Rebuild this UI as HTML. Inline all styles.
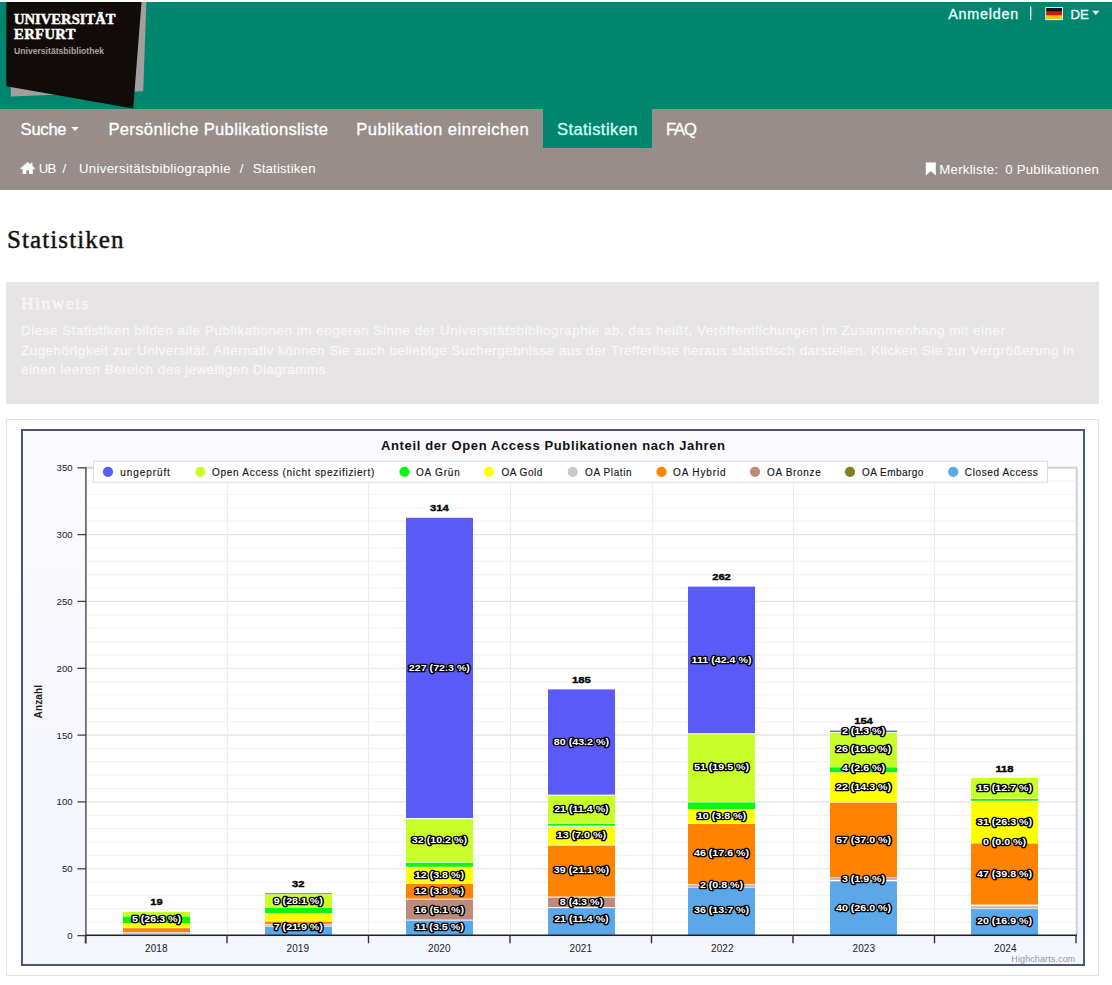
<!DOCTYPE html>
<html><head><meta charset="utf-8"><title>Statistiken</title>
<style>
*{margin:0;padding:0}
html,body{width:1112px;height:985px;overflow:hidden;background:#fff}
body{position:relative;font-family:"Liberation Sans",sans-serif}
</style></head><body>
<svg width="1112" height="985" viewBox="0 0 1112 985" style="position:absolute;left:0;top:0;display:block">
<defs><linearGradient id="bg" x1="0" y1="0" x2="0" y2="1"><stop offset="0" stop-color="#fafafe"/><stop offset="1" stop-color="#f4f5fd"/></linearGradient></defs>
<rect x="0" y="0" width="1112" height="2" fill="#f8fdfc"/>
<rect x="0" y="2" width="1112" height="107" fill="#00866e"/>
<rect x="0" y="109" width="1112" height="81" fill="#978e8c"/>
<rect x="543" y="109" width="109" height="39" fill="#00866e"/>
<polygon points="10.8,2 146.4,2 143.2,91.3 10.8,96.6" fill="#a39e9f"/>
<polygon points="6.3,2 141.5,2 133.2,108.5 6.3,86.2" fill="#110c09"/>
<text x="14.00" y="24.10" text-anchor="start" style="font-family:'Liberation Serif',serif;font-size:14.6px;font-weight:bold" fill="#fff" textLength="101.50" lengthAdjust="spacing" stroke="#fff" stroke-width="0.5">UNIVERSITÄT</text>
<text x="14.00" y="39.00" text-anchor="start" style="font-family:'Liberation Serif',serif;font-size:14.6px;font-weight:bold" fill="#fff" textLength="61.50" lengthAdjust="spacing" stroke="#fff" stroke-width="0.5">ERFURT</text>
<text x="14.00" y="53.80" text-anchor="start" style="font-family:'Liberation Sans',sans-serif;font-size:8.6px;font-weight:bold" fill="#aca5a5" textLength="90.00" lengthAdjust="spacing">Universitätsbibliothek</text>
<text x="948.30" y="18.90" text-anchor="start" style="font-family:'Liberation Sans',sans-serif;font-size:14.3px;font-weight:normal" fill="#f2fffb" textLength="69.80" lengthAdjust="spacing" stroke="#f2fffb" stroke-width="0.3">Anmelden</text>
<rect x="1030" y="6.5" width="1.3" height="13.3" fill="#f2fffb"/>
<rect x="1045.2" y="7" width="17.8" height="13.1" fill="#e8e8e8"/>
<rect x="1046.2" y="8" width="15.8" height="3.8" fill="#111"/>
<rect x="1046.2" y="11.8" width="15.8" height="3.8" fill="#dd1111"/>
<rect x="1046.2" y="15.6" width="15.8" height="3.5" fill="#f5c800"/>
<text x="1070.50" y="18.90" text-anchor="start" style="font-family:'Liberation Sans',sans-serif;font-size:13.2px;font-weight:normal" fill="#f2fffb" stroke="#f2fffb" stroke-width="0.3">DE</text>
<polygon points="1092.2,10.8 1099.4,10.8 1095.8,15" fill="#f2fffb"/>
<text x="20.60" y="135.40" text-anchor="start" style="font-family:'Liberation Sans',sans-serif;font-size:16.6px;font-weight:normal" fill="#fff" textLength="46.00" lengthAdjust="spacing" stroke="#fff" stroke-width="0.3">Suche</text>
<polygon points="71.3,127 78.9,127 75.1,131" fill="#fff"/>
<text x="108.40" y="135.40" text-anchor="start" style="font-family:'Liberation Sans',sans-serif;font-size:16.6px;font-weight:normal" fill="#fff" textLength="219.50" lengthAdjust="spacing" stroke="#fff" stroke-width="0.3">Persönliche Publikationsliste</text>
<text x="356.20" y="135.40" text-anchor="start" style="font-family:'Liberation Sans',sans-serif;font-size:16.6px;font-weight:normal" fill="#fff" textLength="172.50" lengthAdjust="spacing" stroke="#fff" stroke-width="0.3">Publikation einreichen</text>
<text x="557.00" y="135.40" text-anchor="start" style="font-family:'Liberation Sans',sans-serif;font-size:16.6px;font-weight:normal" fill="#d4fff3" textLength="80.50" lengthAdjust="spacing" stroke="#d4fff3" stroke-width="0.3">Statistiken</text>
<text x="666.00" y="135.40" text-anchor="start" style="font-family:'Liberation Sans',sans-serif;font-size:16.6px;font-weight:normal" fill="#fff" textLength="31.00" lengthAdjust="spacing" stroke="#fff" stroke-width="0.3">FAQ</text>
<path transform="translate(20.4,162)" d="M7.3 0 L0 6.3 L1.2 7.6 L2.2 6.8 V11.9 H5.9 V8.4 H8.7 V11.9 H12.4 V6.8 L13.4 7.6 L14.6 6.3 L12.1 4.1 V0.8 H10.4 V2.6 Z" fill="#fff"/>
<text x="38.80" y="173.00" text-anchor="start" style="font-family:'Liberation Sans',sans-serif;font-size:13.2px;font-weight:normal" fill="#fff" textLength="17.60" lengthAdjust="spacing">UB</text>
<text x="62.60" y="173.00" text-anchor="start" style="font-family:'Liberation Sans',sans-serif;font-size:13.2px;font-weight:normal" fill="#fff">/</text>
<text x="79.00" y="173.00" text-anchor="start" style="font-family:'Liberation Sans',sans-serif;font-size:13.2px;font-weight:normal" fill="#fff" textLength="151.50" lengthAdjust="spacing">Universitätsbibliographie</text>
<text x="239.80" y="173.00" text-anchor="start" style="font-family:'Liberation Sans',sans-serif;font-size:13.2px;font-weight:normal" fill="#fff">/</text>
<text x="252.70" y="173.00" text-anchor="start" style="font-family:'Liberation Sans',sans-serif;font-size:13.2px;font-weight:normal" fill="#fff" textLength="62.80" lengthAdjust="spacing">Statistiken</text>
<path d="M925.8 162.4 H935.8 V175.4 L930.8 171 L925.8 175.4 Z" fill="#fff"/>
<text x="939.30" y="173.60" text-anchor="start" style="font-family:'Liberation Sans',sans-serif;font-size:13.2px;font-weight:normal" fill="#fff" textLength="58.80" lengthAdjust="spacing">Merkliste:</text>
<text x="1005.20" y="173.60" text-anchor="start" style="font-family:'Liberation Sans',sans-serif;font-size:13.2px;font-weight:normal" fill="#fff" textLength="93.60" lengthAdjust="spacing">0 Publikationen</text>
<text x="7.00" y="247.70" text-anchor="start" style="font-family:'Liberation Serif',serif;font-size:25px;font-weight:normal" fill="#111" textLength="116.50" lengthAdjust="spacing" stroke="#111" stroke-width="0.45">Statistiken</text>
<rect x="6" y="282" width="1093" height="122" fill="#e6e4e5"/>
<text x="21.00" y="309.00" text-anchor="start" style="font-family:'Liberation Serif',serif;font-size:17.5px;font-weight:normal" fill="#f7f7f7" textLength="67.50" lengthAdjust="spacing" stroke="#f7f7f7" stroke-width="0.4">Hinweis</text>
<text x="21.00" y="335.30" text-anchor="start" style="font-family:'Liberation Sans',sans-serif;font-size:13.5px;font-weight:normal" fill="#f7f7f7" textLength="984.00" lengthAdjust="spacing" stroke="#f7f7f7" stroke-width="0.3">Diese Statistiken bilden alle Publikationen im engeren Sinne der Universitätsbibliographie ab, das heißt, Veröffentlichungen im Zusammenhang mit einer</text>
<text x="21.00" y="354.80" text-anchor="start" style="font-family:'Liberation Sans',sans-serif;font-size:13.5px;font-weight:normal" fill="#f7f7f7" textLength="1053.00" lengthAdjust="spacing" stroke="#f7f7f7" stroke-width="0.3">Zugehörigkeit zur Universität. Alternativ können Sie auch beliebige Suchergebnisse aus der Trefferliste heraus statistisch darstellen. Klicken Sie zur Vergrößerung in</text>
<text x="21.00" y="374.30" text-anchor="start" style="font-family:'Liberation Sans',sans-serif;font-size:13.5px;font-weight:normal" fill="#f7f7f7" textLength="308.50" lengthAdjust="spacing" stroke="#f7f7f7" stroke-width="0.3">einen leeren Bereich des jeweiligen Diagramms.</text>
<rect x="6.5" y="419.5" width="1092" height="556" fill="#fff" stroke="#e2e2e2" stroke-width="1"/>
<rect x="22" y="430" width="1062" height="535" fill="url(#bg)" stroke="#4a5878" stroke-width="2"/>
<rect x="86" y="467" width="991" height="468" fill="#ffffff"/>
<line x1="86" x2="1077" y1="935.60" y2="935.60" stroke="#e3e3e3" stroke-width="1.2"/>
<line x1="86" x2="1077" y1="922.23" y2="922.23" stroke="#f3f3f3" stroke-width="1.2"/>
<line x1="86" x2="1077" y1="908.87" y2="908.87" stroke="#f3f3f3" stroke-width="1.2"/>
<line x1="86" x2="1077" y1="895.50" y2="895.50" stroke="#f3f3f3" stroke-width="1.2"/>
<line x1="86" x2="1077" y1="882.13" y2="882.13" stroke="#f3f3f3" stroke-width="1.2"/>
<line x1="86" x2="1077" y1="868.76" y2="868.76" stroke="#e3e3e3" stroke-width="1.2"/>
<line x1="86" x2="1077" y1="855.40" y2="855.40" stroke="#f3f3f3" stroke-width="1.2"/>
<line x1="86" x2="1077" y1="842.03" y2="842.03" stroke="#f3f3f3" stroke-width="1.2"/>
<line x1="86" x2="1077" y1="828.66" y2="828.66" stroke="#f3f3f3" stroke-width="1.2"/>
<line x1="86" x2="1077" y1="815.30" y2="815.30" stroke="#f3f3f3" stroke-width="1.2"/>
<line x1="86" x2="1077" y1="801.93" y2="801.93" stroke="#e3e3e3" stroke-width="1.2"/>
<line x1="86" x2="1077" y1="788.56" y2="788.56" stroke="#f3f3f3" stroke-width="1.2"/>
<line x1="86" x2="1077" y1="775.20" y2="775.20" stroke="#f3f3f3" stroke-width="1.2"/>
<line x1="86" x2="1077" y1="761.83" y2="761.83" stroke="#f3f3f3" stroke-width="1.2"/>
<line x1="86" x2="1077" y1="748.46" y2="748.46" stroke="#f3f3f3" stroke-width="1.2"/>
<line x1="86" x2="1077" y1="735.10" y2="735.10" stroke="#e3e3e3" stroke-width="1.2"/>
<line x1="86" x2="1077" y1="721.73" y2="721.73" stroke="#f3f3f3" stroke-width="1.2"/>
<line x1="86" x2="1077" y1="708.36" y2="708.36" stroke="#f3f3f3" stroke-width="1.2"/>
<line x1="86" x2="1077" y1="694.99" y2="694.99" stroke="#f3f3f3" stroke-width="1.2"/>
<line x1="86" x2="1077" y1="681.63" y2="681.63" stroke="#f3f3f3" stroke-width="1.2"/>
<line x1="86" x2="1077" y1="668.26" y2="668.26" stroke="#e3e3e3" stroke-width="1.2"/>
<line x1="86" x2="1077" y1="654.89" y2="654.89" stroke="#f3f3f3" stroke-width="1.2"/>
<line x1="86" x2="1077" y1="641.53" y2="641.53" stroke="#f3f3f3" stroke-width="1.2"/>
<line x1="86" x2="1077" y1="628.16" y2="628.16" stroke="#f3f3f3" stroke-width="1.2"/>
<line x1="86" x2="1077" y1="614.79" y2="614.79" stroke="#f3f3f3" stroke-width="1.2"/>
<line x1="86" x2="1077" y1="601.42" y2="601.42" stroke="#e3e3e3" stroke-width="1.2"/>
<line x1="86" x2="1077" y1="588.06" y2="588.06" stroke="#f3f3f3" stroke-width="1.2"/>
<line x1="86" x2="1077" y1="574.69" y2="574.69" stroke="#f3f3f3" stroke-width="1.2"/>
<line x1="86" x2="1077" y1="561.32" y2="561.32" stroke="#f3f3f3" stroke-width="1.2"/>
<line x1="86" x2="1077" y1="547.96" y2="547.96" stroke="#f3f3f3" stroke-width="1.2"/>
<line x1="86" x2="1077" y1="534.59" y2="534.59" stroke="#e3e3e3" stroke-width="1.2"/>
<line x1="86" x2="1077" y1="521.22" y2="521.22" stroke="#f3f3f3" stroke-width="1.2"/>
<line x1="86" x2="1077" y1="507.86" y2="507.86" stroke="#f3f3f3" stroke-width="1.2"/>
<line x1="86" x2="1077" y1="494.49" y2="494.49" stroke="#f3f3f3" stroke-width="1.2"/>
<line x1="86" x2="1077" y1="481.12" y2="481.12" stroke="#f3f3f3" stroke-width="1.2"/>
<line x1="86" x2="1077" y1="467.75" y2="467.75" stroke="#e3e3e3" stroke-width="1.2"/>
<line x1="227.5" x2="227.5" y1="467" y2="935" stroke="#ececec" stroke-width="1"/>
<line x1="368.5" x2="368.5" y1="467" y2="935" stroke="#ececec" stroke-width="1"/>
<line x1="510.5" x2="510.5" y1="467" y2="935" stroke="#ececec" stroke-width="1"/>
<line x1="652.5" x2="652.5" y1="467" y2="935" stroke="#ececec" stroke-width="1"/>
<line x1="793.5" x2="793.5" y1="467" y2="935" stroke="#ececec" stroke-width="1"/>
<line x1="934.5" x2="934.5" y1="467" y2="935" stroke="#ececec" stroke-width="1"/>
<line x1="1076.5" x2="1076.5" y1="467" y2="935" stroke="#ececec" stroke-width="1"/>
<rect x="123" y="911.8" width="67" height="23.20" fill="#fff"/>
<rect x="123" y="911.8" width="67" height="5.00" fill="#c8ff28"/>
<rect x="123" y="916.8" width="67" height="6.20" fill="#08f810"/>
<rect x="123" y="923" width="67" height="4.60" fill="#ffff00"/>
<rect x="123" y="928.2" width="67" height="4.00" fill="#ff8200"/>
<rect x="123" y="932.7" width="67" height="1.10" fill="#d2b2a8"/>
<rect x="265" y="893.3" width="67" height="41.70" fill="#fff"/>
<rect x="265" y="893.3" width="67" height="1.00" fill="#5a5af8"/>
<rect x="265" y="894.3" width="67" height="12.90" fill="#c8ff28"/>
<rect x="265" y="907.8" width="67" height="5.20" fill="#08f810"/>
<rect x="265" y="913.5" width="67" height="7.40" fill="#ffff00"/>
<rect x="265" y="921.6" width="67" height="2.30" fill="#ff8200"/>
<rect x="265" y="924.5" width="67" height="1.30" fill="#d2b2a8"/>
<rect x="265" y="926.6" width="67" height="8.40" fill="#5aa8e8"/>
<rect x="406" y="517.8" width="67" height="417.20" fill="#fff"/>
<rect x="406" y="517.8" width="67" height="300.20" fill="#5a5af8"/>
<rect x="406" y="819.2" width="67" height="43.00" fill="#c8ff28"/>
<rect x="406" y="862.8" width="67" height="4.00" fill="#08f810"/>
<rect x="406" y="867.6" width="67" height="15.30" fill="#ffff00"/>
<rect x="406" y="883.8" width="67" height="14.80" fill="#ff8200"/>
<rect x="406" y="899.6" width="67" height="20.00" fill="#c08a78"/>
<rect x="406" y="920.6" width="67" height="14.40" fill="#5aa8e8"/>
<rect x="548" y="689.4" width="67" height="245.60" fill="#fff"/>
<rect x="548" y="689.4" width="67" height="105.20" fill="#5a5af8"/>
<rect x="548" y="795.6" width="67" height="27.70" fill="#c8ff28"/>
<rect x="548" y="823.8" width="67" height="1.90" fill="#08f810"/>
<rect x="548" y="826.9" width="67" height="17.70" fill="#ffff00"/>
<rect x="548" y="845.6" width="67" height="51.00" fill="#ff8200"/>
<rect x="548" y="897.6" width="67" height="9.50" fill="#c08a78"/>
<rect x="548" y="908.1" width="67" height="26.90" fill="#5aa8e8"/>
<rect x="688" y="586.6" width="67" height="348.40" fill="#fff"/>
<rect x="688" y="586.6" width="67" height="146.60" fill="#5a5af8"/>
<rect x="688" y="734.2" width="67" height="67.40" fill="#c8ff28"/>
<rect x="688" y="802.4" width="67" height="6.60" fill="#08f810"/>
<rect x="688" y="810" width="67" height="13.60" fill="#ffff00"/>
<rect x="688" y="824" width="67" height="60.00" fill="#ff8200"/>
<rect x="688" y="884.6" width="67" height="2.30" fill="#d2b2a8"/>
<rect x="688" y="887.6" width="67" height="47.40" fill="#5aa8e8"/>
<rect x="830" y="730.6" width="67" height="204.40" fill="#fff"/>
<rect x="830" y="730.6" width="67" height="1.30" fill="#5a5af8"/>
<rect x="830" y="732.6" width="67" height="34.60" fill="#c8ff28"/>
<rect x="830" y="767.4" width="67" height="4.90" fill="#08f810"/>
<rect x="830" y="772.6" width="67" height="29.70" fill="#ffff00"/>
<rect x="830" y="802.7" width="67" height="74.30" fill="#ff8200"/>
<rect x="830" y="877.2" width="67" height="2.80" fill="#d2b2a8"/>
<rect x="830" y="881.3" width="67" height="53.70" fill="#5aa8e8"/>
<rect x="971" y="778" width="67" height="157.00" fill="#fff"/>
<rect x="971" y="778" width="67" height="20.60" fill="#c8ff28"/>
<rect x="971" y="799" width="67" height="1.80" fill="#08f810"/>
<rect x="971" y="802" width="67" height="41.00" fill="#ffff00"/>
<rect x="971" y="843.5" width="67" height="61.10" fill="#ff8200"/>
<rect x="971" y="906.2" width="67" height="2.20" fill="#d2b2a8"/>
<rect x="971" y="909.1" width="67" height="25.90" fill="#5aa8e8"/>
<path d="M86 467.8 H1076.7 V935" fill="none" stroke="#d2d2d2" stroke-width="2"/>
<line x1="85.9" x2="85.9" y1="467" y2="943.5" stroke="#6e6e6e" stroke-width="1.8"/>
<line x1="77.4" x2="86" y1="935.6" y2="935.6" stroke="#444" stroke-width="1.3"/>
<text x="72.60" y="939.10" text-anchor="end" style="font-family:'Liberation Sans',sans-serif;font-size:9.6px;font-weight:normal" fill="#222">0</text>
<line x1="77.4" x2="86" y1="868.8" y2="868.8" stroke="#444" stroke-width="1.3"/>
<text x="72.60" y="872.26" text-anchor="end" style="font-family:'Liberation Sans',sans-serif;font-size:9.6px;font-weight:normal" fill="#222">50</text>
<line x1="77.4" x2="86" y1="801.9" y2="801.9" stroke="#444" stroke-width="1.3"/>
<text x="72.60" y="805.43" text-anchor="end" style="font-family:'Liberation Sans',sans-serif;font-size:9.6px;font-weight:normal" fill="#222">100</text>
<line x1="77.4" x2="86" y1="735.1" y2="735.1" stroke="#444" stroke-width="1.3"/>
<text x="72.60" y="738.60" text-anchor="end" style="font-family:'Liberation Sans',sans-serif;font-size:9.6px;font-weight:normal" fill="#222">150</text>
<line x1="77.4" x2="86" y1="668.3" y2="668.3" stroke="#444" stroke-width="1.3"/>
<text x="72.60" y="671.76" text-anchor="end" style="font-family:'Liberation Sans',sans-serif;font-size:9.6px;font-weight:normal" fill="#222">200</text>
<line x1="77.4" x2="86" y1="601.4" y2="601.4" stroke="#444" stroke-width="1.3"/>
<text x="72.60" y="604.92" text-anchor="end" style="font-family:'Liberation Sans',sans-serif;font-size:9.6px;font-weight:normal" fill="#222">250</text>
<line x1="77.4" x2="86" y1="534.6" y2="534.6" stroke="#444" stroke-width="1.3"/>
<text x="72.60" y="538.09" text-anchor="end" style="font-family:'Liberation Sans',sans-serif;font-size:9.6px;font-weight:normal" fill="#222">300</text>
<line x1="77.4" x2="86" y1="467.8" y2="467.8" stroke="#444" stroke-width="1.3"/>
<text x="72.60" y="471.25" text-anchor="end" style="font-family:'Liberation Sans',sans-serif;font-size:9.6px;font-weight:normal" fill="#222">350</text>
<line x1="86" x2="1077" y1="935.3" y2="935.3" stroke="#222" stroke-width="1.6"/>
<line x1="85.5" x2="85.5" y1="935" y2="943.3" stroke="#333" stroke-width="1.4"/>
<line x1="227.0" x2="227.0" y1="935" y2="943.3" stroke="#333" stroke-width="1.4"/>
<line x1="368.5" x2="368.5" y1="935" y2="943.3" stroke="#333" stroke-width="1.4"/>
<line x1="510.0" x2="510.0" y1="935" y2="943.3" stroke="#333" stroke-width="1.4"/>
<line x1="651.5" x2="651.5" y1="935" y2="943.3" stroke="#333" stroke-width="1.4"/>
<line x1="793.0" x2="793.0" y1="935" y2="943.3" stroke="#333" stroke-width="1.4"/>
<line x1="934.5" x2="934.5" y1="935" y2="943.3" stroke="#333" stroke-width="1.4"/>
<line x1="1076.0" x2="1076.0" y1="935" y2="943.3" stroke="#333" stroke-width="1.4"/>
<text x="156.25" y="952.10" text-anchor="middle" style="font-family:'Liberation Sans',sans-serif;font-size:10px;font-weight:normal" fill="#222" textLength="22.50" lengthAdjust="spacing">2018</text>
<text x="297.75" y="952.10" text-anchor="middle" style="font-family:'Liberation Sans',sans-serif;font-size:10px;font-weight:normal" fill="#222" textLength="22.50" lengthAdjust="spacing">2019</text>
<text x="439.25" y="952.10" text-anchor="middle" style="font-family:'Liberation Sans',sans-serif;font-size:10px;font-weight:normal" fill="#222" textLength="22.50" lengthAdjust="spacing">2020</text>
<text x="580.75" y="952.10" text-anchor="middle" style="font-family:'Liberation Sans',sans-serif;font-size:10px;font-weight:normal" fill="#222" textLength="22.50" lengthAdjust="spacing">2021</text>
<text x="722.25" y="952.10" text-anchor="middle" style="font-family:'Liberation Sans',sans-serif;font-size:10px;font-weight:normal" fill="#222" textLength="22.50" lengthAdjust="spacing">2022</text>
<text x="863.75" y="952.10" text-anchor="middle" style="font-family:'Liberation Sans',sans-serif;font-size:10px;font-weight:normal" fill="#222" textLength="22.50" lengthAdjust="spacing">2023</text>
<text x="1005.25" y="952.10" text-anchor="middle" style="font-family:'Liberation Sans',sans-serif;font-size:10px;font-weight:normal" fill="#222" textLength="22.50" lengthAdjust="spacing">2024</text>
<text transform="translate(41.6,701.7) rotate(-90)" text-anchor="middle" style="font-family:'Liberation Sans',sans-serif;font-size:10px;font-weight:bold" fill="#222" textLength="33.5" lengthAdjust="spacing">Anzahl</text>
<text x="381.00" y="449.90" text-anchor="start" style="font-family:'Liberation Sans',sans-serif;font-size:13px;font-weight:bold" fill="#111" textLength="344.00" lengthAdjust="spacing">Anteil der Open Access Publikationen nach Jahren</text>
<rect x="93.5" y="461.2" width="954" height="21" fill="#fff" stroke="#dcdcdc" stroke-width="1"/>
<circle cx="108" cy="471.8" r="5.1" fill="#5a5af8"/>
<text x="120.20" y="475.50" text-anchor="start" style="font-family:'Liberation Sans',sans-serif;font-size:10px;font-weight:normal" fill="#151515" textLength="49.70" lengthAdjust="spacing" stroke="#151515" stroke-width="0.15">ungeprüft</text>
<circle cx="200.4" cy="471.8" r="5.1" fill="#c8ff28"/>
<text x="212.00" y="475.50" text-anchor="start" style="font-family:'Liberation Sans',sans-serif;font-size:10px;font-weight:normal" fill="#151515" textLength="162.30" lengthAdjust="spacing" stroke="#151515" stroke-width="0.15">Open Access (nicht spezifiziert)</text>
<circle cx="404.5" cy="471.8" r="5.1" fill="#08f810"/>
<text x="416.00" y="475.50" text-anchor="start" style="font-family:'Liberation Sans',sans-serif;font-size:10px;font-weight:normal" fill="#151515" textLength="43.80" lengthAdjust="spacing" stroke="#151515" stroke-width="0.15">OA Grün</text>
<circle cx="489" cy="471.8" r="5.1" fill="#ffff00"/>
<text x="501.40" y="475.50" text-anchor="start" style="font-family:'Liberation Sans',sans-serif;font-size:10px;font-weight:normal" fill="#151515" textLength="40.90" lengthAdjust="spacing" stroke="#151515" stroke-width="0.15">OA Gold</text>
<circle cx="572.7" cy="471.8" r="5.1" fill="#c8c8c8"/>
<text x="585.00" y="475.50" text-anchor="start" style="font-family:'Liberation Sans',sans-serif;font-size:10px;font-weight:normal" fill="#151515" textLength="46.60" lengthAdjust="spacing" stroke="#151515" stroke-width="0.15">OA Platin</text>
<circle cx="661.5" cy="471.8" r="5.1" fill="#ff8200"/>
<text x="673.00" y="475.50" text-anchor="start" style="font-family:'Liberation Sans',sans-serif;font-size:10px;font-weight:normal" fill="#151515" textLength="52.60" lengthAdjust="spacing" stroke="#151515" stroke-width="0.15">OA Hybrid</text>
<circle cx="755" cy="471.8" r="5.1" fill="#c08a78"/>
<text x="767.00" y="475.50" text-anchor="start" style="font-family:'Liberation Sans',sans-serif;font-size:10px;font-weight:normal" fill="#151515" textLength="53.80" lengthAdjust="spacing" stroke="#151515" stroke-width="0.15">OA Bronze</text>
<circle cx="850" cy="471.8" r="5.1" fill="#808020"/>
<text x="862.00" y="475.50" text-anchor="start" style="font-family:'Liberation Sans',sans-serif;font-size:10px;font-weight:normal" fill="#151515" textLength="61.40" lengthAdjust="spacing" stroke="#151515" stroke-width="0.15">OA Embargo</text>
<circle cx="953.2" cy="471.8" r="5.1" fill="#5aa8e8"/>
<text x="964.80" y="475.50" text-anchor="start" style="font-family:'Liberation Sans',sans-serif;font-size:10px;font-weight:normal" fill="#151515" textLength="73.00" lengthAdjust="spacing" stroke="#151515" stroke-width="0.15">Closed Access</text>
<text transform="translate(156.50,904.80) scale(1.22,1)" text-anchor="middle" style="font-family:'Liberation Sans',sans-serif;font-size:9.2px;font-weight:bold" fill="#000" stroke="#000" stroke-width="0.35">19</text>
<text transform="translate(298.30,886.70) scale(1.22,1)" text-anchor="middle" style="font-family:'Liberation Sans',sans-serif;font-size:9.2px;font-weight:bold" fill="#000" stroke="#000" stroke-width="0.35">32</text>
<text transform="translate(439.40,511.00) scale(1.22,1)" text-anchor="middle" style="font-family:'Liberation Sans',sans-serif;font-size:9.2px;font-weight:bold" fill="#000" stroke="#000" stroke-width="0.35">314</text>
<text transform="translate(581.40,683.10) scale(1.22,1)" text-anchor="middle" style="font-family:'Liberation Sans',sans-serif;font-size:9.2px;font-weight:bold" fill="#000" stroke="#000" stroke-width="0.35">185</text>
<text transform="translate(721.50,579.80) scale(1.22,1)" text-anchor="middle" style="font-family:'Liberation Sans',sans-serif;font-size:9.2px;font-weight:bold" fill="#000" stroke="#000" stroke-width="0.35">262</text>
<text transform="translate(863.50,724.00) scale(1.22,1)" text-anchor="middle" style="font-family:'Liberation Sans',sans-serif;font-size:9.2px;font-weight:bold" fill="#000" stroke="#000" stroke-width="0.35">154</text>
<text transform="translate(1004.50,771.80) scale(1.22,1)" text-anchor="middle" style="font-family:'Liberation Sans',sans-serif;font-size:9.2px;font-weight:bold" fill="#000" stroke="#000" stroke-width="0.35">118</text>
<text transform="translate(156.50,922.00) scale(1.16,1)" text-anchor="middle" style="font-family:'Liberation Sans',sans-serif;font-size:9.2px;font-weight:bold" fill="#fff" stroke="#000" stroke-width="2.7" paint-order="stroke" stroke-linejoin="round">5 (26.3 %)</text>
<text transform="translate(298.30,903.60) scale(1.16,1)" text-anchor="middle" style="font-family:'Liberation Sans',sans-serif;font-size:9.2px;font-weight:bold" fill="#fff" stroke="#000" stroke-width="2.7" paint-order="stroke" stroke-linejoin="round">9 (28.1 %)</text>
<text transform="translate(298.30,930.00) scale(1.16,1)" text-anchor="middle" style="font-family:'Liberation Sans',sans-serif;font-size:9.2px;font-weight:bold" fill="#fff" stroke="#000" stroke-width="2.7" paint-order="stroke" stroke-linejoin="round">7 (21.9 %)</text>
<text transform="translate(439.40,670.60) scale(1.16,1)" text-anchor="middle" style="font-family:'Liberation Sans',sans-serif;font-size:9.2px;font-weight:bold" fill="#fff" stroke="#000" stroke-width="2.7" paint-order="stroke" stroke-linejoin="round">227 (72.3 %)</text>
<text transform="translate(439.40,843.10) scale(1.16,1)" text-anchor="middle" style="font-family:'Liberation Sans',sans-serif;font-size:9.2px;font-weight:bold" fill="#fff" stroke="#000" stroke-width="2.7" paint-order="stroke" stroke-linejoin="round">32 (10.2 %)</text>
<text transform="translate(439.40,878.40) scale(1.16,1)" text-anchor="middle" style="font-family:'Liberation Sans',sans-serif;font-size:9.2px;font-weight:bold" fill="#fff" stroke="#000" stroke-width="2.7" paint-order="stroke" stroke-linejoin="round">12 (3.8 %)</text>
<text transform="translate(439.40,893.90) scale(1.16,1)" text-anchor="middle" style="font-family:'Liberation Sans',sans-serif;font-size:9.2px;font-weight:bold" fill="#fff" stroke="#000" stroke-width="2.7" paint-order="stroke" stroke-linejoin="round">12 (3.8 %)</text>
<text transform="translate(439.40,913.00) scale(1.16,1)" text-anchor="middle" style="font-family:'Liberation Sans',sans-serif;font-size:9.2px;font-weight:bold" fill="#fff" stroke="#000" stroke-width="2.7" paint-order="stroke" stroke-linejoin="round">16 (5.1 %)</text>
<text transform="translate(439.40,930.00) scale(1.16,1)" text-anchor="middle" style="font-family:'Liberation Sans',sans-serif;font-size:9.2px;font-weight:bold" fill="#fff" stroke="#000" stroke-width="2.7" paint-order="stroke" stroke-linejoin="round">11 (3.5 %)</text>
<text transform="translate(581.40,744.60) scale(1.16,1)" text-anchor="middle" style="font-family:'Liberation Sans',sans-serif;font-size:9.2px;font-weight:bold" fill="#fff" stroke="#000" stroke-width="2.7" paint-order="stroke" stroke-linejoin="round">80 (43.2 %)</text>
<text transform="translate(581.40,811.60) scale(1.16,1)" text-anchor="middle" style="font-family:'Liberation Sans',sans-serif;font-size:9.2px;font-weight:bold" fill="#fff" stroke="#000" stroke-width="2.7" paint-order="stroke" stroke-linejoin="round">21 (11.4 %)</text>
<text transform="translate(581.40,838.20) scale(1.16,1)" text-anchor="middle" style="font-family:'Liberation Sans',sans-serif;font-size:9.2px;font-weight:bold" fill="#fff" stroke="#000" stroke-width="2.7" paint-order="stroke" stroke-linejoin="round">13 (7.0 %)</text>
<text transform="translate(581.40,873.10) scale(1.16,1)" text-anchor="middle" style="font-family:'Liberation Sans',sans-serif;font-size:9.2px;font-weight:bold" fill="#fff" stroke="#000" stroke-width="2.7" paint-order="stroke" stroke-linejoin="round">39 (21.1 %)</text>
<text transform="translate(581.40,904.70) scale(1.16,1)" text-anchor="middle" style="font-family:'Liberation Sans',sans-serif;font-size:9.2px;font-weight:bold" fill="#fff" stroke="#000" stroke-width="2.7" paint-order="stroke" stroke-linejoin="round">8 (4.3 %)</text>
<text transform="translate(581.40,922.00) scale(1.16,1)" text-anchor="middle" style="font-family:'Liberation Sans',sans-serif;font-size:9.2px;font-weight:bold" fill="#fff" stroke="#000" stroke-width="2.7" paint-order="stroke" stroke-linejoin="round">21 (11.4 %)</text>
<text transform="translate(721.50,662.90) scale(1.16,1)" text-anchor="middle" style="font-family:'Liberation Sans',sans-serif;font-size:9.2px;font-weight:bold" fill="#fff" stroke="#000" stroke-width="2.7" paint-order="stroke" stroke-linejoin="round">111 (42.4 %)</text>
<text transform="translate(721.50,769.70) scale(1.16,1)" text-anchor="middle" style="font-family:'Liberation Sans',sans-serif;font-size:9.2px;font-weight:bold" fill="#fff" stroke="#000" stroke-width="2.7" paint-order="stroke" stroke-linejoin="round">51 (19.5 %)</text>
<text transform="translate(721.50,818.50) scale(1.16,1)" text-anchor="middle" style="font-family:'Liberation Sans',sans-serif;font-size:9.2px;font-weight:bold" fill="#fff" stroke="#000" stroke-width="2.7" paint-order="stroke" stroke-linejoin="round">10 (3.8 %)</text>
<text transform="translate(721.50,855.50) scale(1.16,1)" text-anchor="middle" style="font-family:'Liberation Sans',sans-serif;font-size:9.2px;font-weight:bold" fill="#fff" stroke="#000" stroke-width="2.7" paint-order="stroke" stroke-linejoin="round">46 (17.6 %)</text>
<text transform="translate(721.50,887.90) scale(1.16,1)" text-anchor="middle" style="font-family:'Liberation Sans',sans-serif;font-size:9.2px;font-weight:bold" fill="#fff" stroke="#000" stroke-width="2.7" paint-order="stroke" stroke-linejoin="round">2 (0.8 %)</text>
<text transform="translate(721.50,912.70) scale(1.16,1)" text-anchor="middle" style="font-family:'Liberation Sans',sans-serif;font-size:9.2px;font-weight:bold" fill="#fff" stroke="#000" stroke-width="2.7" paint-order="stroke" stroke-linejoin="round">36 (13.7 %)</text>
<text transform="translate(863.50,734.30) scale(1.16,1)" text-anchor="middle" style="font-family:'Liberation Sans',sans-serif;font-size:9.2px;font-weight:bold" fill="#fff" stroke="#000" stroke-width="2.7" paint-order="stroke" stroke-linejoin="round">2 (1.3 %)</text>
<text transform="translate(863.50,751.50) scale(1.16,1)" text-anchor="middle" style="font-family:'Liberation Sans',sans-serif;font-size:9.2px;font-weight:bold" fill="#fff" stroke="#000" stroke-width="2.7" paint-order="stroke" stroke-linejoin="round">26 (16.9 %)</text>
<text transform="translate(863.50,771.30) scale(1.16,1)" text-anchor="middle" style="font-family:'Liberation Sans',sans-serif;font-size:9.2px;font-weight:bold" fill="#fff" stroke="#000" stroke-width="2.7" paint-order="stroke" stroke-linejoin="round">4 (2.6 %)</text>
<text transform="translate(863.50,790.20) scale(1.16,1)" text-anchor="middle" style="font-family:'Liberation Sans',sans-serif;font-size:9.2px;font-weight:bold" fill="#fff" stroke="#000" stroke-width="2.7" paint-order="stroke" stroke-linejoin="round">22 (14.3 %)</text>
<text transform="translate(863.50,842.90) scale(1.16,1)" text-anchor="middle" style="font-family:'Liberation Sans',sans-serif;font-size:9.2px;font-weight:bold" fill="#fff" stroke="#000" stroke-width="2.7" paint-order="stroke" stroke-linejoin="round">57 (37.0 %)</text>
<text transform="translate(863.50,881.60) scale(1.16,1)" text-anchor="middle" style="font-family:'Liberation Sans',sans-serif;font-size:9.2px;font-weight:bold" fill="#fff" stroke="#000" stroke-width="2.7" paint-order="stroke" stroke-linejoin="round">3 (1.9 %)</text>
<text transform="translate(863.50,911.00) scale(1.16,1)" text-anchor="middle" style="font-family:'Liberation Sans',sans-serif;font-size:9.2px;font-weight:bold" fill="#fff" stroke="#000" stroke-width="2.7" paint-order="stroke" stroke-linejoin="round">40 (26.0 %)</text>
<text transform="translate(1004.50,791.10) scale(1.16,1)" text-anchor="middle" style="font-family:'Liberation Sans',sans-serif;font-size:9.2px;font-weight:bold" fill="#fff" stroke="#000" stroke-width="2.7" paint-order="stroke" stroke-linejoin="round">15 (12.7 %)</text>
<text transform="translate(1004.50,824.80) scale(1.16,1)" text-anchor="middle" style="font-family:'Liberation Sans',sans-serif;font-size:9.2px;font-weight:bold" fill="#fff" stroke="#000" stroke-width="2.7" paint-order="stroke" stroke-linejoin="round">31 (26.3 %)</text>
<text transform="translate(1004.50,845.00) scale(1.16,1)" text-anchor="middle" style="font-family:'Liberation Sans',sans-serif;font-size:9.2px;font-weight:bold" fill="#fff" stroke="#000" stroke-width="2.7" paint-order="stroke" stroke-linejoin="round">0 (0.0 %)</text>
<text transform="translate(1004.50,876.80) scale(1.16,1)" text-anchor="middle" style="font-family:'Liberation Sans',sans-serif;font-size:9.2px;font-weight:bold" fill="#fff" stroke="#000" stroke-width="2.7" paint-order="stroke" stroke-linejoin="round">47 (39.8 %)</text>
<text transform="translate(1004.50,923.70) scale(1.16,1)" text-anchor="middle" style="font-family:'Liberation Sans',sans-serif;font-size:9.2px;font-weight:bold" fill="#fff" stroke="#000" stroke-width="2.7" paint-order="stroke" stroke-linejoin="round">20 (16.9 %)</text>
<text x="1075.30" y="962.20" text-anchor="end" style="font-family:'Liberation Sans',sans-serif;font-size:9px;font-weight:normal" fill="#999" textLength="64.00" lengthAdjust="spacing">Highcharts.com</text>
</svg>
</body></html>
